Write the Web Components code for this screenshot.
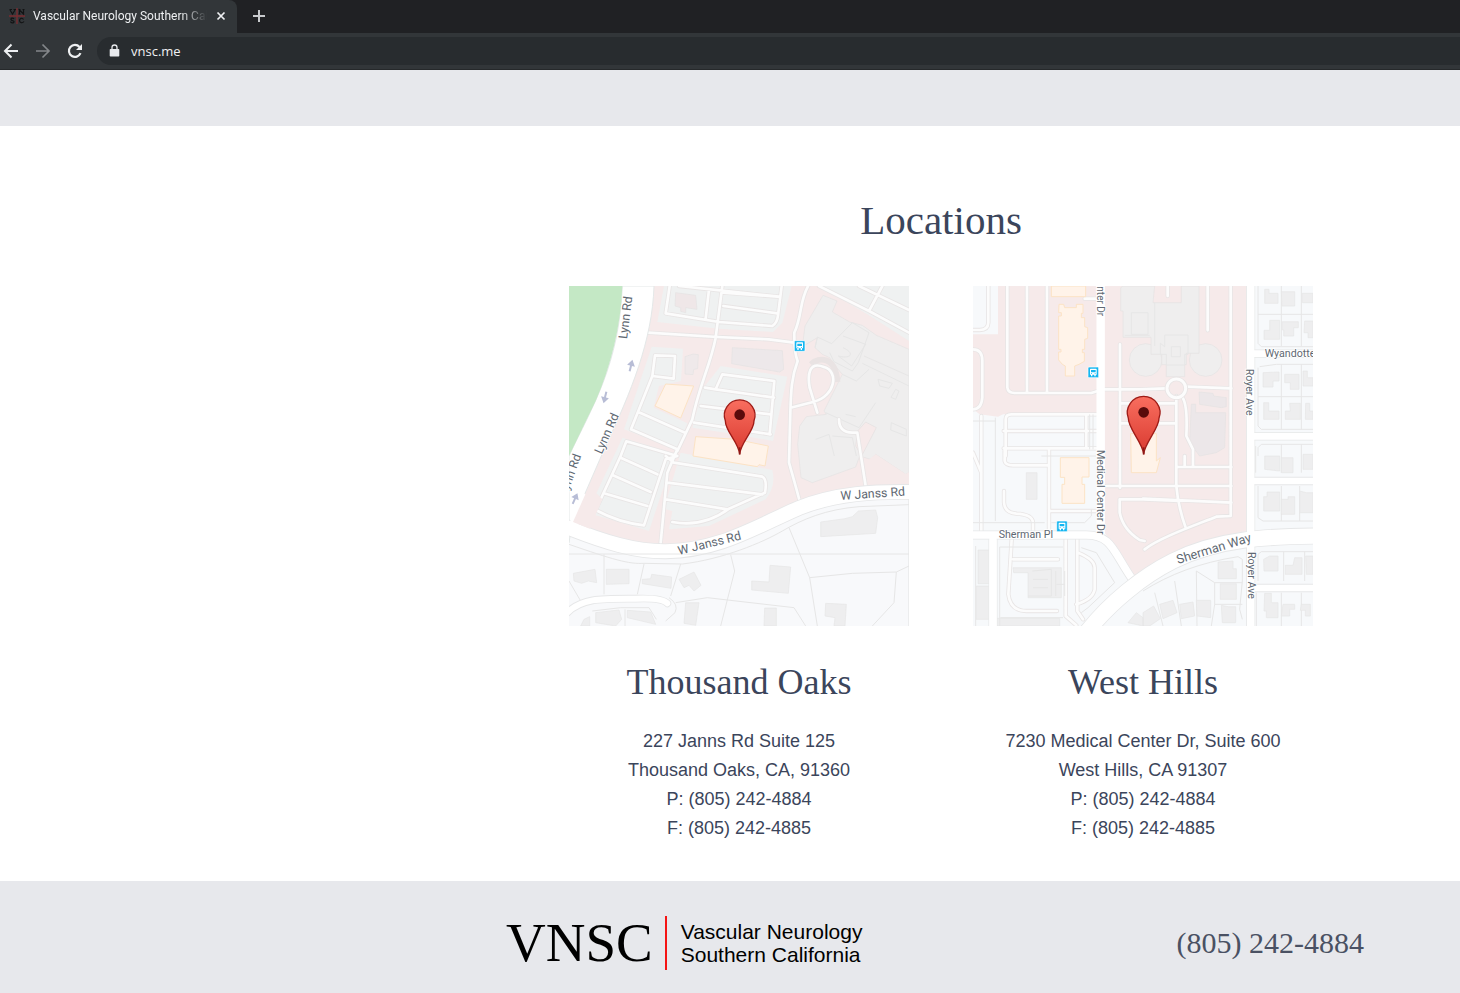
<!DOCTYPE html>
<html lang="en">
<head>
<meta charset="utf-8">
<title>Vascular Neurology Southern California</title>
<style>
  body { margin: 0; background: #fff; font-family: "Liberation Sans", Arial, sans-serif; color: #3b455b; }
</style>
</head>
<body>
<vnsc-page></vnsc-page>

<script>
const define = (name, html) => {
  const template = document.createElement('template');
  template.innerHTML = html;
  customElements.define(name, class extends HTMLElement {
    constructor() {
      super();
      this.attachShadow({ mode: 'open' }).append(template.content.cloneNode(true));
    }
  });
};

/* Browser frame */
define('browser-tab', `
<style>
  :host { display: flex; align-items: center; box-sizing: border-box; width: 237px; height: 33px; padding: 0 8px 1px; background: #323639; border-radius: 0 8px 0 0; color: #eef0f2; }
  svg { display: block; flex: none; }
  .title { flex: 1; margin-left: 7px; overflow: hidden; white-space: nowrap; font: 12px/18px Roboto, "Noto Sans", sans-serif; -webkit-mask-image: linear-gradient(90deg, #000 85%, transparent); mask-image: linear-gradient(90deg, #000 85%, transparent); }
  button { flex: none; margin: 0 0 0 6px; padding: 0; border: 0; background: none; width: 16px; height: 16px; color: inherit; }
</style>
<svg width="18" height="16" viewBox="0 0 18 16" aria-hidden="true">
  <path d="M9 0V16M1 8H17" stroke="#782c31" stroke-width="1.4"/>
  <g fill="none" stroke="#121314" stroke-width="1.2"><path d="M2 2l2.500 4L7 2M1.500 1.500H4M5.500 1.500H8M11.500 6V2l4 4V1.500M10.500 1.500h2M14.500 1.500h2M10.500 6h2M6 11C5 9.500 2.500 10 3 11.500S6.500 12.500 6 14 3 15 2.500 13.500M15.500 11.500C14.500 9.500 11.500 10 11.500 12.500S14.500 15.500 16 13.500"/></g>
</svg>
<span class="title"><slot></slot></span>
<button type="button" aria-label="Close tab"><svg width="16" height="16" viewBox="0 0 16 16"><path d="M4.500 4.500l7 7M11.500 4.500l-7 7" stroke="currentColor" stroke-width="1.700"/></svg></button>
`);

define('browser-frame', `
<style>
  :host { display: block; }
  .tabs { display: flex; align-items: center; height: 33px; background: #202124; }
  button { display: block; flex: none; margin: 0; padding: 0; border: 0; background: none; color: #eef0f2; width: 22px; height: 22px; }
  button svg { display: block; }
  .new { margin: 0 0 1px 11px; color: #c8cacd; }
  .bar { display: flex; align-items: center; box-sizing: border-box; height: 37px; border-bottom: 1px solid #26292b; background: #323639; }
  .bar button { margin-right: 10px; }
  .bar button:disabled { color: #84878a; }
  .address { display: flex; flex: 1; align-items: center; height: 28px; margin-left: 1px; padding-left: 12px; border-radius: 14px 0 0 14px; background: #282c2f; color: #e8eaed; }
  input { flex: 1; min-width: 0; margin: 0 0 0 11px; padding: 0; border: 0; outline: 0; background: none; color: #f0f1f3; font: 13px/20px "Open Sans", "Noto Sans", sans-serif; }
</style>
<div class="tabs">
  <browser-tab>Vascular Neurology Southern California</browser-tab>
  <button class="new" type="button" aria-label="New tab"><svg width="22" height="22" viewBox="0 0 22 22"><path d="M11 5v12M5 11h12" stroke="currentColor" stroke-width="2"/></svg></button>
</div>
<div class="bar">
  <button type="button" aria-label="Back"><svg width="22" height="22" viewBox="0 0 22 22" fill="none" stroke="currentColor" stroke-width="2"><path d="M18 11H5M11.500 4.500L5 11l6.500 6.500"/></svg></button>
  <button type="button" aria-label="Forward" disabled><svg width="22" height="22" viewBox="0 0 22 22" fill="none" stroke="currentColor" stroke-width="1.700"><path d="M4 11h13M10.500 4.500L17 11l-6.500 6.500"/></svg></button>
  <button type="button" aria-label="Reload"><svg width="22" height="22" viewBox="0 0 22 22" fill="none" stroke="currentColor" stroke-width="2.200"><path d="M16.500 13.200A6 6 0 1 1 15.500 7"/><path d="M18 4v6h-6z" fill="currentColor" stroke="none"/></svg></button>
  <div class="address">
    <svg width="11" height="14" viewBox="0 0 11 14" aria-hidden="true"><path d="M1.500 5h8q.8 0 .8.8v5.900q0 .8-.8.8h-8q-.8 0-.8-.8V5.800q0-.8.8-.8" fill="currentColor"/><path d="M3 6V3.500a2.500 2.500 0 0 1 5 0V6" fill="none" stroke="currentColor" stroke-width="1.300"/></svg>
    <input type="text" value="vnsc.me" aria-label="Address">
  </div>
</div>
`);

/* Street maps: all shapes share a 1020 x 1020 drawing grid */
const mapStyle = `
<style>
  :host { display: block; width: 100%; aspect-ratio: 1; }
  svg { display: block; width: 100%; height: 100%; }
  text { font-family: Roboto, sans-serif; fill: #606872; stroke: #fff; stroke-width: 5px; paint-order: stroke; }
  .lot { fill: #eff1f1; }
  .b { fill: #efeeee; stroke: #e4e2e2; stroke-width: 2px; }
  .h { fill: #eeeeef; stroke: #e5e5e6; stroke-width: 2px; }
  .shop { fill: #fff3e9; stroke: #fce3c5; stroke-width: 3px; }
  .line { fill: none; stroke: #e6e6e6; stroke-width: 3px; }
</style>`;
const stroked = (d, width, edge, extra) =>
  `<path d="${d}" fill="none" stroke="${edge}" stroke-width="${width + extra}" stroke-linejoin="round" stroke-linecap="round"/>` +
  `<path d="${d}" fill="none" stroke="#fcfcfc" stroke-width="${width}" stroke-linejoin="round" stroke-linecap="round"/>`;
const lanes = d => stroked(d, 8, '#e8e5e5', 5);
const road = (d, width) => stroked(d, width, '#e6e7e8', 5).replace('#fcfcfc', '#fff');
const bus = (x, y) => `<g transform="translate(${x} ${y})"><rect x="-16" y="-16" width="32" height="32" rx="3" fill="#14b6f1" stroke="#fff" stroke-width="2"/><path d="M-10-9q0-2 2-2H8q2 0 2 2V7H7v5H3V7H-3v5h-4V7h-3z" fill="#fff"/><path d="M-7-7H7V0H-7zM-7 3h3v2h-3zM4 3h3v2H4z" fill="#14b6f1"/></g>`;
const pin = (top, r) => {
  const cy = top + r;
  return `<path d="M512 504C509 470 ${514 - r} ${cy + 48} ${512 - r + 3} ${cy + 18}A${r} ${r} 0 1 1 ${512 + r - 3} ${cy + 18}C${510 + r} ${cy + 48} 515 470 512 504Z" fill="url(#red)" stroke="#9e1b16" stroke-width="4"/><path d="M512 484V506" stroke="#8e1714" stroke-width="5"/><circle cx="512" cy="${cy}" r="16" fill="#590b0b"/>`;
};
const defs = `<defs><linearGradient id="red" x1="0" y1="0" x2="0" y2="1"><stop offset="0" stop-color="#f96e5f"/><stop offset="1" stop-color="#d93a30"/></linearGradient></defs>`;
const arrow = (x, y, a) => `<path transform="translate(${x} ${y}) rotate(${a})" d="M0-18L12 0H3V17H-3V0H-12Z" fill="#b8bdd6"/>`;

define('map-thousand-oaks', mapStyle + `
<svg viewBox="0 0 1020 1020" role="img" aria-label="Map of Thousand Oaks office">
${defs}
<path d="M0 0H1020V1020H0z" fill="#f8f9fb"/>
<path d="M250 0H1020V600C800 590 700 640 600 690S400 780 270 775 100 740 10 710z" fill="#f6eaea"/>
<g class="lot">
  <path d="M285 0H668L640 110 612 138 450 128 265 108z"/>
  <path d="M248 182L342 188 336 285 270 300 254 365 355 412 325 492 165 430z"/>
  <path d="M455 240L655 272 612 465 480 442 370 425 400 310z"/>
  <path d="M160 455L325 505 285 600 240 735 55 680z"/>
  <path d="M335 500L610 552Q622 600 590 640L420 720 300 730 310 675 285 668z"/>
  <path d="M750 0H1020V165L895 85z"/>
</g>
<g class="b">
  <path d="M320 20L380 28 384 70 350 65 350 80 335 76 335 65 318 60z" fill="#efe7e8"/>
  <path d="M348 212L372 204 388 206 386 248 374 250 372 266 348 264z" fill="#efe9ea"/>
  <path d="M490 185L640 194 644 250 632 258 488 233z" fill="#ede8ea"/>
  <path d="M762 28L804 45 790 78 842 108 880 118 922 148 1020 190V1020 595H1020V560L1010 565 920 505 905 520 872 510 860 543 730 590 696 575 686 475 692 420 712 392 772 385 765 375 820 265 790 230 782 215 760 205 738 185 745 155 700 182 708 120z"/>
</g>
<path d="M1020 605C930 590 880 600 860 604L875 540 920 505 1010 564 1020 558z" fill="#f6eaea"/>
<path d="M890 408L922 425 878 510 860 480 866 435z" fill="#f6eaea" stroke="#e3e0e0" stroke-width="2"/>
<path class="line" d="M738 185L745 153 788 173 850 110 900 140 868 230 850 255 795 227 782 200M822 150L890 175 848 240 808 210C845 220 860 202 822 185M880 232L1020 300M885 210L1020 270M820 265L862 285 900 250M770 380L870 425 920 350M830 385L860 392M740 460L780 445 796 510M790 450L850 455 862 510M927 280L970 292 960 307 932 300zM980 310L990 315 980 340 966 334zM967 410L1012 430V450L965 432z"/>
<path d="M726 235C750 212 800 210 805 288" fill="none" stroke="#e9e3e3" stroke-width="18"/>
${lanes(`M720 -5C690 45 700 90 676 140Q675 200 686 225C665 280 666 330 664 380L660 530Q680 600 692 645
M237 140L445 153 600 160 675 170M460 0L440 155C425 235 390 300 370 400L325 495
M302 0L290 82 450 108 610 120Q625 110 627 88L638 0M330 0L630 32M420 10L410 98M463 60L625 82M463 20L625 32
M258 208L318 210 314 278 250 270zM250 270L186 430 325 490M208 378L348 440
M408 305L440 310 460 265 616 285 602 445M395 360L605 385M375 410L605 445M440 310L615 335
M155 510L172 466 325 510 290 520 225 718Q150 710 80 672L155 510M155 515L265 565M130 567L245 618M105 622L235 660
M325 490L295 560 275 770M290 510L315 530 580 572Q595 580 588 620L480 668C430 705 375 720 310 708M295 590L580 625M290 640L475 670
M665 365L735 347C800 330 810 255 765 243C720 225 715 265 722 305L745 380
M750 0L900 75 1020 140M870 0L1020 72M940 0L900 75M810 400Q810 440 850 440L865 440 890 600`)}
<path class="shop" d="M290 294L374 300 335 396 258 360zM380 452L500 460 598 480 588 540 570 536 565 542 372 510z"/>
<path d="M160 0H255C250 165 185 320 110 480L10 710 0 770V510C70 360 150 240 160 0z" fill="#fff" stroke="#e4e8e8" stroke-width="3"/>
<path d="M0 0H160C156 120 125 240 80 345L0 510z" fill="#c4e8c5"/>
${road('M-10 722C110 770 200 797 290 796C450 794 560 722 690 666C800 622 920 616 1030 618', 42)}
<path d="M3 706L42 620 90 650 20 725z" fill="#fff"/><path d="M12 708L60 600 100 640 62 728z" fill="#f6eaea"/>
<path class="line" d="M0 775C130 820 180 835 225 832L340 834C460 820 580 770 640 735S770 670 870 662L1020 656M0 804H1020M105 805V925M225 834L205 925M335 834L305 930M485 806L497 855 455 1020M660 725L722 875 745 1020M722 875L850 862 982 858 1020 840M982 858L975 950 910 1020M320 950L415 935 675 965 710 1020M0 885L35 945M300 935Q330 955 318 980L290 1005M70 975L155 965 240 965 262 1000M168 970V1020"/>
${road('M-5 980C40 935 100 938 200 938Q280 935 295 952', 18)}
<g class="h">
  <path d="M13 862L78 850 83 890 58 885 38 892 15 885zM112 850L180 850V893L112 895zM220 880L245 878 248 865 308 873 306 907 220 893zM330 880L375 858 396 898 375 915 360 898 345 905z"/>
  <path d="M690 833L690 833M755 708L828 698 850 692 868 675 920 672 926 695 920 742 755 752zM603 838L665 843 658 922 548 912V885L600 888zM770 952L832 955 828 1020H795L798 995 768 990zM587 966H622V1020H585zM350 950L390 950 380 1018 345 1012zM80 980L150 972 158 1000 140 1020 80 1010zM175 973L245 978 260 1015 175 995zM45 1000L62 992V1020H35z"/>
</g>
<text font-size="37" transform="translate(174 160) rotate(-83)">Lynn Rd</text>
<text font-size="37" transform="translate(98 506) rotate(-66)">Lynn Rd</text>
<text font-size="37" transform="translate(-7 630) rotate(-70)">Lynn Rd</text>
<text font-size="37" transform="translate(330 807) rotate(-14)">W Janss Rd</text>
<text font-size="37" transform="translate(815 642) rotate(-4)">W Janss Rd</text>
${arrow(186, 239, 14)}${arrow(108, 334, 194)}${arrow(18, 638, 24)}
${bus(692, 180)}
${pin(340, 46)}
</svg>`);

define('map-west-hills', mapStyle + `
<svg viewBox="0 0 1020 1020" role="img" aria-label="Map of West Hills office">
${defs}
<path d="M0 0H1020V1020H0z" fill="#f7f9fb"/>
<path d="M0 145H75V0H820V735C700 755 590 800 485 870L395 740V385H90L75 392 20 385 0 370z" fill="#f6eaea"/>
<g class="b">
  <circle cx="518" cy="222" r="49"/>
  <circle cx="698" cy="222" r="49"/>
  <path d="M450 0H545L540 50 625 50V0H678V202H640V236H635V272H580V236H566V205H534V154H450V75H443V5z"/>
  <path d="M678 318L720 322 722 330 760 335V362L745 365 680 355zM655 355H668V380H758L755 485 730 500 680 510 650 470z" fill="#ece7e9"/>
</g>
<path class="line" d="M575 182V147H645V205H635V237H580V205H562V172zM595 182H622V212H595zM475 80H525V145H475zM545 50V180M455 148H530"/>
${lanes(`M46 0V110Q45 132 20 132H0M0 190Q28 190 28 225V335Q25 370 0 370
M103 0V305Q105 321 125 321H355L372 316M162 0V320M222 0V320
M335 38H372M441 175V605M395 310H500L580 307M640 302L775 307M441 352H610M441 412H610
M704 0V133M584 0V30M773 0V690L730 692C660 720 560 755 515 790M610 330V600Q615 660 638 725M625 330Q645 350 640 450L660 490V510
M98 510V400Q98 385 115 385H370M92 435H370M92 487H370M340 385V487M95 490V525Q98 538 120 538H225M228 487V745
M610 543H775M400 600H775M510 638L775 650M440 640H510L620 645M635 510V540M660 510V540
M440 640V680Q450 730 500 762L515 765
M25 390V740M0 500L25 560M93 615V650Q95 680 130 683Q178 685 180 710V745M228 675H368
M278 755V990L310 1018M116 760L106 925Q112 975 160 975H252M120 820H255M313 760V975L330 1000M315 800Q365 820 365 845V910Q360 940 310 955`)}
<circle cx="610" cy="307" r="28" fill="none" stroke="#e8e5e5" stroke-width="14"/><circle cx="610" cy="307" r="28" fill="none" stroke="#fcfcfc" stroke-width="9"/>
<g class="shop">
  <path d="M235 0H338V32H235zM258 55H272L275 65H310V55H330V82H325V95H335V122L344 125V157L335 160V190H328V200H334V226L318 235 305 240V270H277V240L268 235 257 222V198H264V190H257V90H265V80H257z"/>
  <path d="M473 443H550V525L562 515 550 560H475zM262 515H348V573H327V595H335V652H267V595H275V574H262z"/>
</g>
<g class="h">
  <path d="M160 560H192V640H160zM15 792H53V893H15zM10 900H52V1000H10zM120 845L265 845V935H165V860H122zM70 997H260V1020H70z"/>
</g>
<path class="line" d="M178 855L235 850V930H165M180 880H225M180 905H225M248 855V930M250 895H275M275 855V930M67 395V705M67 405H0M0 710H215M80 1020V783H270M82 995H270M8 780V1020M350 385V490M360 385V490M355 670V690L335 710H235M205 510H370M325 785L370 800 425 890 345 965 325 980"/>
${road('M60 760V1030M833 -10V1030', 22)}
${road('M840 203H1030M840 451H1030M840 585H1030M840 906H1030', 20)}
<path d="M383 -5V745" stroke="#fff" stroke-width="25" fill="none"/>
${road('M-10 747H340C420 747 420 800 485 890', 22)}
${road('M340 1040C410 950 510 870 600 825C740 755 890 752 1030 750', 46)}
<path d="M833 -5V1025" stroke="#fff" stroke-width="22" fill="none"/><path d="M60 755V1025" stroke="#fff" stroke-width="22" fill="none"/>
<g class="line">
  <path d="M855 0V172L865 182H1020M855 85H1020M925 0V180M985 0V180M860 242L910 235H1020M855 245V420L865 430H1020M855 332H1020M925 235V430M985 235V430M855 510V485L865 475H1020M925 475V560M985 475V560M848 480V560M855 600V695L870 705H1020M925 600V705M980 600V705M855 885V805L865 797H1020M932 797V885M995 797V885M850 920V1020M925 920V1020M985 920V1020"/>
  <path d="M510 915C590 865 680 830 795 812L808 820V885L800 970 808 1000M545 920L570 1020M605 885L625 1020M670 855L672 1020M670 855L725 890H808M725 890V955H808M725 955L715 1020"/>
</g>
<g class="h">
  <path d="M875 10H888V22H915V52H875zM925 17H965V60H927zM988 22H1020V50H988zM890 103H920V160H873V133H890zM928 107H976V125H962V150H932V132H928zM995 105H1020V155H1005V140H993z"/>
  <path d="M870 260L918 258V285H900V303H870zM935 265H978V310H952V290H935zM990 255H1003V275H1020V300H990zM872 350H887V375H918V400H872zM950 352H982V400H937V375H952zM998 352H1010V375H1020V400H997z"/>
  <path d="M875 510H920V555L875 550zM925 515H960V560H925zM990 505H1020V550H990zM882 618H920V675H872V632H882zM925 640H945V632H965V685H925zM980 615L1000 620H1020V680H980z"/>
  <path d="M872 820L890 810H915V855H873zM965 815H987V865H937V838H960zM998 810H1020V865H1000zM875 922H895V950H915V995H880V975H873zM930 955H965V970H950V990H925zM985 955H1012V990H997V973H982z"/>
  <path d="M735 828L780 825V848H790V878H735zM742 893H790V940H742zM745 958L765 962H788V1010H748zM670 943H713V995L672 990zM620 955L660 948 665 990 625 998zM560 955L600 943 612 980 570 998zM510 980L542 960 562 998 530 1020H510zM465 1010L490 980 510 995V1020z"/>
</g>
<text font-size="30" transform="translate(373 1) rotate(90)">nter Dr</text>
<text font-size="32" transform="translate(373 492) rotate(90)">Medical Center Dr</text>
<text font-size="32" transform="translate(820 248) rotate(90)">Royer Ave</text>
<text font-size="32" transform="translate(824 798) rotate(90)">Royer Ave</text>
<text font-size="32" x="875" y="214">Wyandotte</text>
<text font-size="32" x="77" y="755">Sherman Pl</text>
<text font-size="38" transform="translate(615 834) rotate(-17)">Sherman Way</text>
${bus(361, 259)}${bus(267, 721)}
${pin(330, 49)}
</svg>`);

/* Page sections */
define('office-card', `
<style>
  :host { display: block; flex: 0 1 340px; min-width: 0; text-align: center; }
  .name { margin: 32px 0 21px; font: 36px/48px "Liberation Serif", "Times New Roman", serif; }
  .details { font-size: 18px; line-height: 29px; }
</style>
<slot name="map"></slot>
<div class="name" role="heading" aria-level="3"><slot name="name"></slot></div>
<div class="details"><slot></slot></div>
`);

define('locations-section', `
<style>
  :host { display: block; box-sizing: border-box; padding: 68px 0 38px 422px; background: #fff; }
  h2 { margin: 0 0 40px; text-align: center; font: 41px/52px "Liberation Serif", "Times New Roman", serif; }
  .offices { display: flex; justify-content: center; gap: 64px; }
  address { font-style: normal; }
</style>
<h2>Locations</h2>
<div class="offices">
  <office-card>
    <map-thousand-oaks slot="map"></map-thousand-oaks>
    <span slot="name">Thousand Oaks</span>
    <address>227 Janns Rd Suite 125<br>Thousand Oaks, CA, 91360<br>P: (805) 242-4884<br>F: (805) 242-4885</address>
  </office-card>
  <office-card>
    <map-west-hills slot="map"></map-west-hills>
    <span slot="name">West Hills</span>
    <address>7230 Medical Center Dr, Suite 600<br>West Hills, CA 91307<br>P: (805) 242-4884<br>F: (805) 242-4885</address>
  </office-card>
</div>
`);

define('vnsc-logo', `
<style>
  :host { display: flex; align-items: center; color: #000; }
  .initials { font: 55px/54px "Liberation Serif", "Times New Roman", serif; }
  .name { margin-left: 12px; padding: 4px 0 4px 14px; border-left: 2px solid #f51414; font-size: 21px; line-height: 23px; white-space: nowrap; }
</style>
<span class="initials">VNSC</span>
<span class="name">Vascular Neurology<br>Southern California</span>
`);

define('site-footer', `
<style>
  :host { display: flex; align-items: center; justify-content: space-between; box-sizing: border-box; min-height: 112px; padding: 12px 96px 0 506px; background: #e7e8ec; }
  a { color: #4a5163; text-decoration: none; font: 30px/40px "Liberation Serif", "Times New Roman", serif; white-space: nowrap; }
</style>
<vnsc-logo></vnsc-logo>
<a href="tel:8052424884">(805) 242-4884</a>
`);

define('vnsc-page', `
<style>
  :host { display: block; }
  .band { height: 56px; background: #e7e8ec; }
</style>
<browser-frame></browser-frame>
<main>
  <div class="band"></div>
  <locations-section></locations-section>
</main>
<site-footer></site-footer>
`);
</script>
</body>
</html>
